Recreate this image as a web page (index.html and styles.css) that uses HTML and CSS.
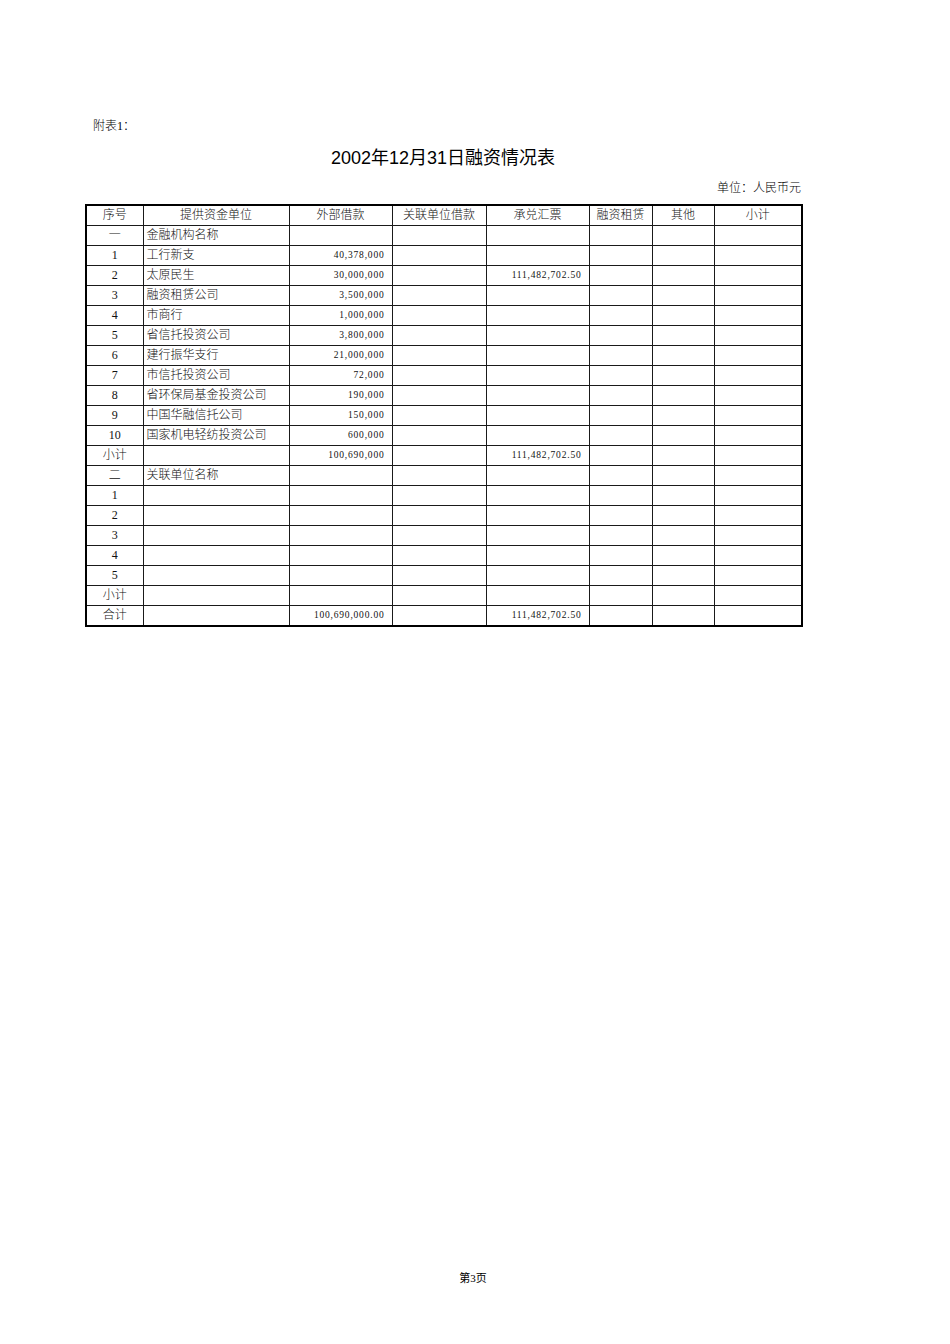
FILE: index.html
```html
<!DOCTYPE html>
<html lang="zh-CN">
<head>
<meta charset="utf-8">
<link rel="stylesheet" href="styles.css">
</head>
<body>
<div class="page">
  <div class="note">附表1：</div>
  <h1 class="title">2002年12月31日融资情况表</h1>
  <div class="unit">单位：人民币元</div>
  <table class="sheet">
    <colgroup>
      <col class="c1"><col class="c2"><col class="c3"><col class="c4"><col class="c5"><col class="c6"><col class="c7"><col class="c8">
    </colgroup>
    <tr class="head"><td>序号</td><td>提供资金单位</td><td>外部借款</td><td>关联单位借款</td><td>承兑汇票</td><td class="g">融资租赁</td><td>其他</td><td class="g">小计</td></tr>
    <tr><td>一</td><td class="name">金融机构名称</td><td></td><td></td><td></td><td class="g"></td><td></td><td class="g"></td></tr>
    <tr><td>1</td><td class="name">工行新支</td><td class="num">40,378,000</td><td></td><td></td><td class="g"></td><td></td><td class="g"></td></tr>
    <tr><td>2</td><td class="name">太原民生</td><td class="num">30,000,000</td><td></td><td class="num">111,482,702.50</td><td class="g"></td><td></td><td class="g"></td></tr>
    <tr><td>3</td><td class="name">融资租赁公司</td><td class="num">3,500,000</td><td></td><td></td><td class="g"></td><td></td><td class="g"></td></tr>
    <tr><td>4</td><td class="name">市商行</td><td class="num">1,000,000</td><td></td><td></td><td class="g"></td><td></td><td class="g"></td></tr>
    <tr><td>5</td><td class="name">省信托投资公司</td><td class="num">3,800,000</td><td></td><td></td><td class="g"></td><td></td><td class="g"></td></tr>
    <tr><td>6</td><td class="name">建行振华支行</td><td class="num">21,000,000</td><td></td><td></td><td class="g"></td><td></td><td class="g"></td></tr>
    <tr><td>7</td><td class="name">市信托投资公司</td><td class="num">72,000</td><td></td><td></td><td class="g"></td><td></td><td class="g"></td></tr>
    <tr><td>8</td><td class="name">省环保局基金投资公司</td><td class="num">190,000</td><td></td><td></td><td class="g"></td><td></td><td class="g"></td></tr>
    <tr><td>9</td><td class="name">中国华融信托公司</td><td class="num">150,000</td><td></td><td></td><td class="g"></td><td></td><td class="g"></td></tr>
    <tr><td>10</td><td class="name">国家机电轻纺投资公司</td><td class="num">600,000</td><td></td><td></td><td class="g"></td><td></td><td class="g"></td></tr>
    <tr><td>小计</td><td class="name"></td><td class="num">100,690,000</td><td></td><td class="num">111,482,702.50</td><td class="g"></td><td></td><td class="g"></td></tr>
    <tr><td>二</td><td class="name">关联单位名称</td><td></td><td></td><td></td><td class="g"></td><td></td><td class="g"></td></tr>
    <tr><td>1</td><td class="name"></td><td></td><td></td><td></td><td class="g"></td><td></td><td class="g"></td></tr>
    <tr><td>2</td><td class="name"></td><td></td><td></td><td></td><td class="g"></td><td></td><td class="g"></td></tr>
    <tr><td>3</td><td class="name"></td><td></td><td></td><td></td><td class="g"></td><td></td><td class="g"></td></tr>
    <tr><td>4</td><td class="name"></td><td></td><td></td><td></td><td class="g"></td><td></td><td class="g"></td></tr>
    <tr><td>5</td><td class="name"></td><td></td><td></td><td></td><td class="g"></td><td></td><td class="g"></td></tr>
    <tr><td>小计</td><td class="name"></td><td></td><td></td><td></td><td class="g"></td><td></td><td class="g"></td></tr>
    <tr><td>合计</td><td class="name"></td><td class="num">100,690,000.00</td><td></td><td class="num">111,482,702.50</td><td class="g"></td><td></td><td class="g"></td></tr>
  </table>
  <div class="spacer"></div>
  <div class="footer">第3页</div>
</div>
</body>
</html>
```
FILE: styles.css
```css
html, body {
  margin: 0;
  padding: 0;
  background: #ffffff;
}
body {
  font-family: "Liberation Serif", "Noto Sans CJK SC", serif;
  color: #000;
}
.page {
  width: 950px;
  height: 1344px;
  box-sizing: border-box;
  padding: 118px 0 0 0;
  display: flex;
  flex-direction: column;
}
.note {
  margin-left: 93px;
  font-size: 12px;
  line-height: 16px;
  height: 16px;
  font-weight: 300;
}
.title {
  margin: 12px 0 0 0;
  font-family: "Liberation Sans", "Noto Sans CJK SC", sans-serif;
  font-weight: normal;
  font-size: 18px;
  line-height: 24px;
  text-align: center;
  padding-right: 64px;
}
.unit {
  margin-top: 10px;
  font-size: 12px;
  line-height: 16px;
  text-align: right;
  padding-right: 149px;
  font-weight: 300;
}
.sheet {
  margin-top: 8px;
  margin-left: 85px;
  width: 718px;
  border-collapse: collapse;
  table-layout: fixed;
  border: 2px solid #000;
}
.c1 { width: 57px; }
.c2 { width: 146px; }
.c3 { width: 103px; }
.c4 { width: 94px; }
.c5 { width: 103px; }
.c6 { width: 63px; }
.c7 { width: 62px; }
.c8 { width: 88px; }
.sheet td {
  height: 19px;
  padding: 0;
  border: 1px solid #1a1a1a;
  font-size: 12px;
  line-height: 19px;
  text-align: center;
  white-space: nowrap;
  overflow: hidden;
  font-weight: 300;
  color: #111;
}
.sheet td.g {
  border-left-color: #8c8c8c;
}
.sheet td.name {
  text-align: left;
  padding-left: 3px;
}
.sheet td.num {
  text-align: right;
  padding-right: 7px;
  font-family: "Liberation Serif", serif;
  font-size: 9.5px;
  letter-spacing: 0.8px;
}
.spacer {
  flex: 1;
}
.footer {
  font-size: 11px;
  line-height: 14px;
  text-align: center;
  padding-right: 4px;
  margin-bottom: 59px;
}
```
